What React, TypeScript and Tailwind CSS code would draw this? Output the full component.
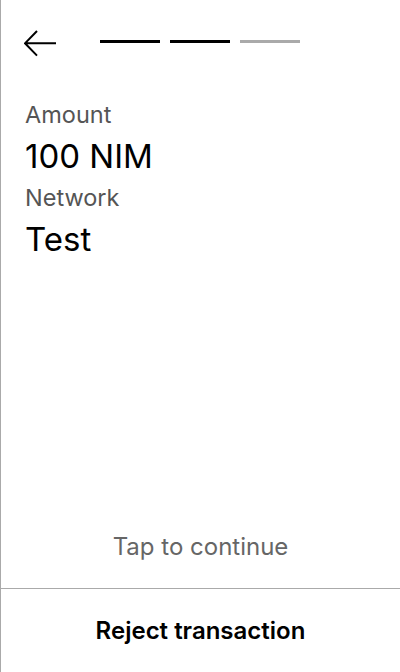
export default function App() {
  return (
    <div className="flex h-[672px] w-[400px] flex-col border-l border-[#aaaaaa] bg-white font-['Inter',sans-serif] text-black">
      <div className="flex items-start px-6 pt-[30px]">
        <svg className="-ml-px" width="32" height="27" viewBox="0 0 32 27" fill="none" stroke="#000" strokeWidth="2">
          <path d="M32 13.3H1.5M13 1L1 13.3L13 25.6" />
        </svg>
        <div className="ml-[44px] mt-[10px] flex gap-[10px]">
          <div className="h-[3px] w-[60px] bg-black" />
          <div className="h-[3px] w-[60px] bg-black" />
          <div className="h-[3px] w-[60px] bg-[#aaaaaa]" />
        </div>
      </div>
      <div className="flex flex-col px-6 pt-[43px]">
        <span className="text-[23.5px] leading-[30px] text-[#555555]">Amount</span>
        <span className="text-[33px] leading-[53px]">100 NIM</span>
        <span className="text-[23.5px] leading-[30px] text-[#555555]">Network</span>
        <span className="text-[33px] leading-[53px]">Test</span>
      </div>
      <div className="flex-1" />
      <div className="pb-[23px] text-center text-[24px] leading-[36px] text-[#666666]">Tap to continue</div>
      <div className="border-t border-[#aaaaaa]" />
      <div className="flex h-[83px] items-center justify-center text-[24px] font-semibold">Reject transaction</div>
    </div>
  );
}
